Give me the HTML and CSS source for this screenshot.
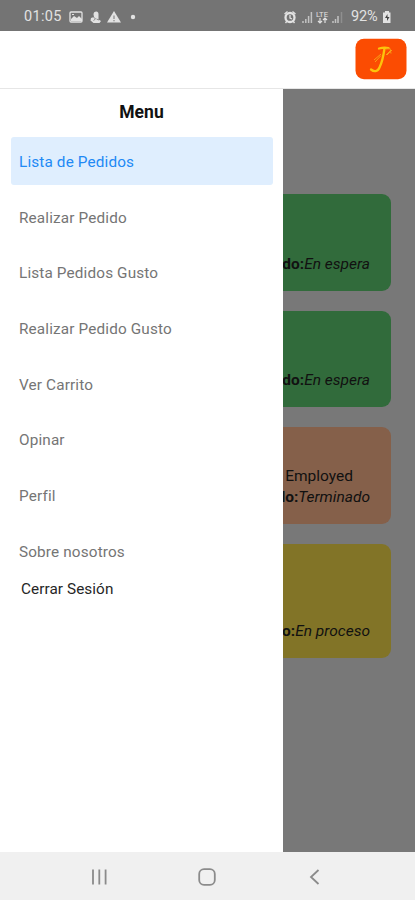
FILE: index.html
```html
<!DOCTYPE html>
<html lang="es">
<head>
<meta charset="utf-8">
<title>Menu</title>
<link rel="stylesheet" href="styles.css">
</head>
<body>
<div class="status">
  <span class="clock">01:05</span>
  <svg class="notices" width="72" height="16" viewBox="0 0 72 16">
    <rect x="1" y="3" width="12" height="10" rx="1" fill="none" stroke="currentColor" stroke-width="1.3"/>
    <path d="M2 12V10l3-3 3 2 2-2 3 3v2zM3 5h2v1H3z" fill="currentColor"/>
    <path d="M27.500 2.500c-2 0-3 1-3 3l.5 2.500-3 1-.5 2.500 3 2.500h6l1.500-2-2.500-1.500V5c0-1.500-1-2.500-2-2.500z" fill="currentColor"/>
    <path d="M24.500 8l2 2-2 1.500m3-1.500l2.500 1" fill="none" stroke="#747474" stroke-width=".8"/>
    <path d="M45 2l7 11.500h-14z" fill="currentColor"/>
    <path d="M45 6.500v3.500M45 11v1.300" stroke="#747474" stroke-width="1"/>
    <circle cx="64" cy="8" r="2.200" fill="currentColor"/>
  </svg>
  <svg class="signals" width="64" height="16" viewBox="0 0 64 16">
    <circle cx="8" cy="8.500" r="4.500" fill="none" stroke="currentColor" stroke-width="2.300"/>
    <path d="M2.500 5l3-2.500m5 0l3 2.500M8 6v3l2 1M5 12l-1.500 2m7.500-2l1.500 2" fill="none" stroke="currentColor" stroke-width="1.300"/>
    <path d="M21 14v-2m2.800 2v-4m2.800 4V7m2.800 7V3" stroke="currentColor" stroke-width="1.500" opacity=".72"/>
    <text x="34" y="7.500" font-size="7.500" textLength="12" lengthAdjust="spacingAndGlyphs" fill="currentColor">LTE</text>
    <path d="M38 9v5m-2-2l2 2 2-2m3 2V9m-2 2l2-2 2 2" fill="none" stroke="currentColor" stroke-width="1.200"/>
    <path d="M51 14v-2m2.500 2v-4m2.500 4V7" stroke="currentColor" stroke-width="1.500" opacity=".72"/>
    <path d="M59.500 14V3" stroke="currentColor" stroke-width="1.500" opacity=".25"/>
  </svg>
  <span class="percent">92%</span>
  <svg class="battery" width="10" height="14" viewBox="0 0 10 14">
    <path d="M3 1h4v1.500h1.500v10.500h-7.500v-10.500H3z" fill="currentColor"/>
    <path d="M5.500 4L3 8h2v3l2.500-4h-2z" fill="#444"/>
  </svg>
</div>
<header class="topbar">
  <svg class="logo" width="52" height="42" viewBox="0 0 52 42">
    <rect x=".5" y=".8" width="51" height="40.400" rx="8.500" fill="#fb4c02"/>
    <path d="M24 10.500q5-1.500 9.500-.5M29.500 10.500c-1 7-2.500 14-5 19-2 4.500-5.500 4.500-8.500 2" fill="none" stroke="#fcc40b" stroke-width="2.300" stroke-linecap="round"/>
    <path d="M20 24l6-6.500m-7 4.500l7-6m5 1l5-5m-4 5l5-5m-6-1l4-.5 1 5" fill="none" stroke="#f9a015" stroke-width="1"/>
  </svg>
</header>
<div class="screen">
  <main class="orders">
    <article class="card waiting"><p><b>Estado:</b><i>En espera</i></p></article>
    <article class="card waiting"><p><b>Estado:</b><i>En espera</i></p></article>
    <article class="card done"><p class="name">Employed</p><p><b>Estado:</b><i>Terminado</i></p></article>
    <article class="card progress"><p><b>Estado:</b><i>En proceso</i></p></article>
  </main>
  <aside class="drawer">
    <h1>Menu</h1>
    <nav class="menu">
      <a class="active">Lista de Pedidos</a>
      <a>Realizar Pedido</a>
      <a>Lista Pedidos Gusto</a>
      <a>Realizar Pedido Gusto</a>
      <a>Ver Carrito</a>
      <a>Opinar</a>
      <a>Perfil</a>
      <a>Sobre nosotros</a>
    </nav>
    <div class="logout">Cerrar Sesión</div>
  </aside>
</div>
<footer class="sysnav">
  <svg width="18" height="18" viewBox="0 0 18 18"><path d="M3 1.500v15M9.300 1.500v15M15.600 1.500v15"/></svg>
  <svg width="18" height="18" viewBox="0 0 18 18"><rect x="1.200" y="1.200" width="15.600" height="15.600" rx="4.800"/></svg>
  <svg width="18" height="18" viewBox="0 0 18 18"><path d="M12.500 2L5 9l7.500 7"/></svg>
</footer>
</body>
</html>
```
FILE: styles.css
```css
* { box-sizing: border-box; }
body {
  margin: 0;
  width: 415px;
  height: 900px;
  overflow: hidden;
  display: flex;
  flex-direction: column;
  font-family: Roboto, "Liberation Sans", sans-serif;
  background: #fff;
}
p, h1 { margin: 0; }
svg { display: block; flex: none; }
.status {
  height: 31px;
  padding: 2px 23px 0 24px;
  display: flex;
  align-items: center;
  background: #747474;
  color: #e2e2e2;
  font-size: 14.5px;
}
.clock { width: 45px; letter-spacing: .35px; }
.signals { margin-left: auto; }
.percent { margin-left: 5px; width: 29px; letter-spacing: -.1px; }
.battery { margin-left: 2px; }
.topbar {
  height: 58px;
  padding: 0 8px 1px 0;
  display: flex;
  justify-content: flex-end;
  align-items: center;
  border-bottom: 1px solid #e6e6e6;
}
.screen { position: relative; height: 763px; background: #787878; overflow: hidden; }
.orders { padding: 105px 24px 0; display: flex; flex-direction: column; gap: 20px; }
.card {
  height: 96.5px;
  padding: 0 21px 16px;
  border-radius: 9px;
  display: flex;
  flex-direction: column;
  justify-content: flex-end;
  align-items: flex-end;
  color: #111;
  font-size: 15.5px;
  line-height: 21px;
  white-space: nowrap;
}
.waiting { background: #316b3b; }
.done { background: #85604a; }
.progress { background: #827427; height: 114.5px; }
.name { padding-right: 17px; }
.drawer {
  position: absolute;
  inset: 0 auto 0 0;
  width: 283px;
  background: #fff;
}
h1 {
  height: 47.5px;
  line-height: 46px;
  text-align: center;
  font-size: 17.5px;
  font-weight: 700;
  color: #111;
}
.menu { padding: 0 10px 0 11px; display: flex; flex-direction: column; gap: 7.7px; }
.menu a {
  height: 48px;
  padding: 3px 8px 0;
  display: flex;
  align-items: center;
  border-radius: 3px;
  color: #757575;
  font-size: 15.3px;
  letter-spacing: .15px;
}
.menu .active { background: #dfeefe; color: #2189f5; }
.logout { padding: 5px 21px; font-size: 15.3px; letter-spacing: .08px; line-height: 20px; color: #262626; }
.sysnav {
  height: 48px;
  padding: 2px 91px 0 90px;
  display: flex;
  align-items: center;
  justify-content: space-between;
  background: #f0f0f0;
  fill: none;
  stroke: #8b8b8b;
  stroke-width: 1.8;
}
```
